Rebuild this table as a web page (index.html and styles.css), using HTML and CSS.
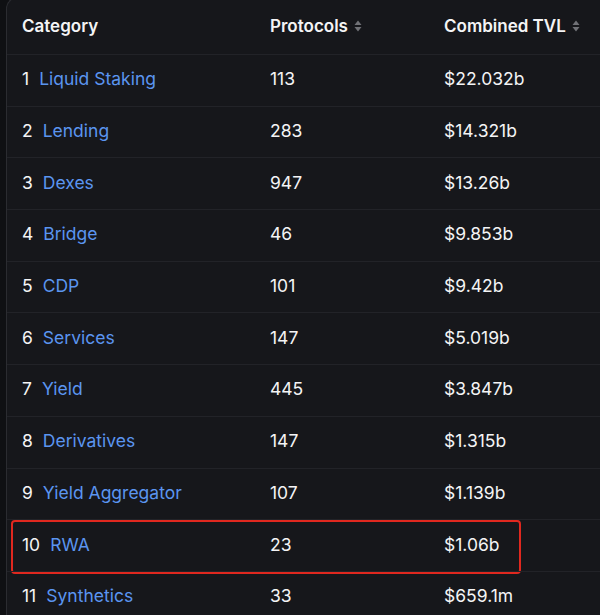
FILE: index.html
```html
<!DOCTYPE html>
<html>
<head>
<meta charset="utf-8">
<link rel="stylesheet" href="styles.css">
</head>
<body>
<div class="panel">
  <div class="row head">
    <div class="cell">Category</div>
    <div class="cell">Protocols <span class="sort"><svg width="8" height="12" viewBox="0 0 8 12"><path d="M4 0.5 L7.5 5 H0.5 Z M4 11.5 L7.5 7 H0.5 Z" fill="#707176"/></svg></span></div>
    <div class="cell">Combined TVL <span class="sort"><svg width="8" height="12" viewBox="0 0 8 12"><path d="M4 0.5 L7.5 5 H0.5 Z M4 11.5 L7.5 7 H0.5 Z" fill="#707176"/></svg></span></div>
  </div>
  <div class="row"><div class="cell"><span class="num">1</span><a class="name">Liquid Staking</a></div><div class="cell">113</div><div class="cell">$22.032b</div></div>
  <div class="row"><div class="cell"><span class="num">2</span><a class="name">Lending</a></div><div class="cell">283</div><div class="cell">$14.321b</div></div>
  <div class="row"><div class="cell"><span class="num">3</span><a class="name">Dexes</a></div><div class="cell">947</div><div class="cell">$13.26b</div></div>
  <div class="row"><div class="cell"><span class="num">4</span><a class="name">Bridge</a></div><div class="cell">46</div><div class="cell">$9.853b</div></div>
  <div class="row"><div class="cell"><span class="num">5</span><a class="name">CDP</a></div><div class="cell">101</div><div class="cell">$9.42b</div></div>
  <div class="row"><div class="cell"><span class="num">6</span><a class="name">Services</a></div><div class="cell">147</div><div class="cell">$5.019b</div></div>
  <div class="row"><div class="cell"><span class="num">7</span><a class="name">Yield</a></div><div class="cell">445</div><div class="cell">$3.847b</div></div>
  <div class="row"><div class="cell"><span class="num">8</span><a class="name">Derivatives</a></div><div class="cell">147</div><div class="cell">$1.315b</div></div>
  <div class="row"><div class="cell"><span class="num">9</span><a class="name">Yield Aggregator</a></div><div class="cell">107</div><div class="cell">$1.139b</div></div>
  <div class="row marked"><div class="cell"><span class="num">10</span><a class="name">RWA</a></div><div class="cell">23</div><div class="cell">$1.06b</div><div class="highlight"></div></div>
  <div class="row"><div class="cell"><span class="num">11</span><a class="name">Synthetics</a></div><div class="cell">33</div><div class="cell">$659.1m</div></div>
</div>
</body>
</html>
```
FILE: styles.css
```css
html, body {
  margin: 0;
  padding: 0;
  background: #0f1013;
  overflow: hidden;
}
body {
  font-family: Inter, "Liberation Sans", sans-serif;
  font-size: 17.5px;
  color: #f4f4f5;
}
.panel {
  margin: -3px 0 0 6px;
  background: #16171b;
  border: 1px solid #2b2c31;
  border-right: none;
  border-radius: 12px 0 0 0;
  min-height: 640px;
}
.row {
  display: grid;
  grid-template-columns: 248px 174px 1fr;
  height: 51.7px;
  align-items: center;
  padding-left: 15px;
  padding-bottom: 3px;
  border-top: 1px solid #222328;
  box-sizing: border-box;
  position: relative;
}
.row.head {
  height: 56px;
  padding-bottom: 0;
  border-top: none;
  font-size: 17px;
  font-weight: 600;
}
.cell {
  display: flex;
  align-items: center;
  white-space: nowrap;
}
.num {
  margin-right: 10px;
}
.name {
  color: #5b95f0;
}
.sort {
  display: inline-flex;
  margin-left: 6px;
}
.highlight {
  position: absolute;
  left: 4px;
  top: 0;
  width: 510px;
  height: 54px;
  border: 2px solid #e0281f;
  border-radius: 4px;
  box-sizing: border-box;
}
```
